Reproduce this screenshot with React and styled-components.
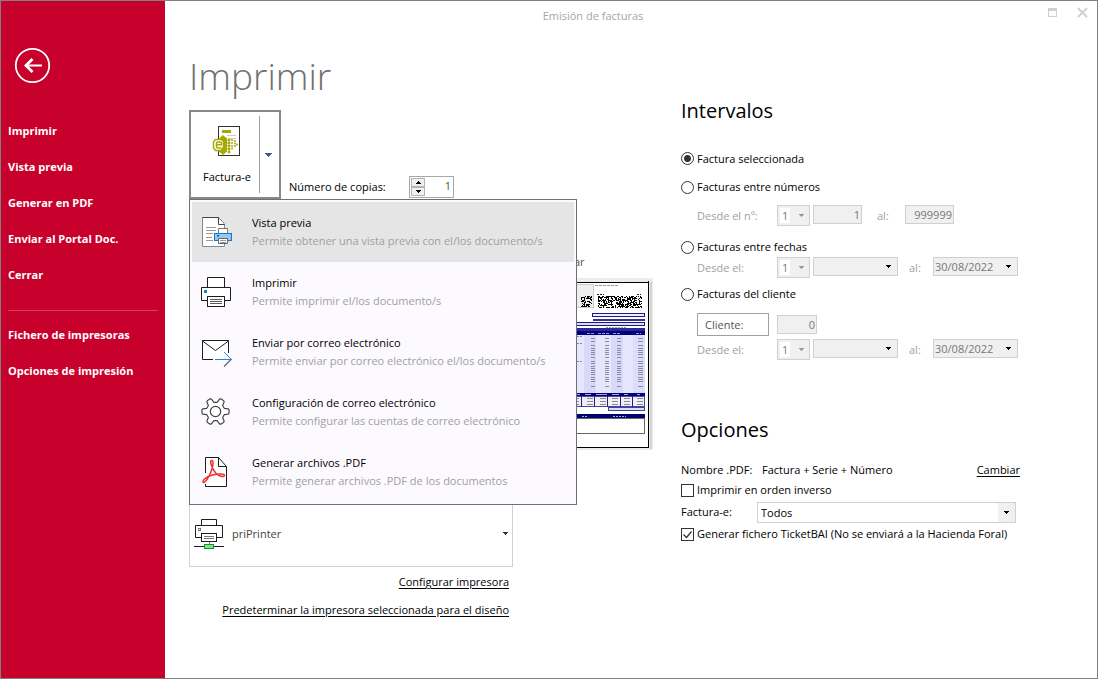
import React from "react";
import styled, { createGlobalStyle, css } from "styled-components";

const Global = createGlobalStyle`
  *, *::before, *::after { box-sizing: border-box; }
  body { margin: 0; background: #fff; color: #000; }
  body, button, input, select { font-family: "Open Sans", "Noto Sans", sans-serif; font-size: 11px; line-height: 16px; }
  button, input, select { color: inherit; border-radius: 0; margin: 0; }
  svg { display: block; flex: none; overflow: visible; }
`;

/* ---------- window frame ---------- */

const Window = styled.div`
  display: grid;
  grid-template-columns: 164px minmax(0, 1fr);
  min-height: 100vh;
  border: 1px solid #808080;
`;

const Sidebar = styled.nav`
  display: flex;
  flex-direction: column;
  background: #c8002c;
  color: #fff;
  padding: 46px 7px 0;
`;

const BackButton = styled.button`
  align-self: flex-start;
  margin: 0 0 29px 6px;
  padding: 0;
  border: 0;
  background: none;
`;

const SideLink = styled.a`
  display: block;
  line-height: 36px;
  font-size: 11px;
  font-weight: 700;
  color: inherit;
  text-decoration: none;
  white-space: nowrap;
`;

const SideRule = styled.hr`
  width: 100%;
  height: 1px;
  margin: 17px 0 6px;
  border: 0;
  background: #d64060;
`;

const Main = styled.main`
  min-width: 0;
`;

const TitleBar = styled.header`
  display: flex;
  align-items: flex-start;
  height: 30px;
  padding-right: 9px;
`;

const WindowTitle = styled.div`
  flex: 1;
  padding: 7px 0 0;
  font-size: 11px;
  color: #a6a6a6;
  text-align: center;
`;

const WindowControls = styled.div`
  display: flex;
  gap: 18px;
  width: 67px;
  padding: 5px 0 0 25px;
`;

const WindowButton = styled.button`
  padding: 0;
  border: 0;
  background: none;
`;

const Columns = styled.div`
  display: grid;
  grid-template-columns: minmax(0, 492px) minmax(0, 1fr);
  padding: 0 24px;
`;

/* ---------- left column ---------- */

const Title = styled.h1`
  margin: 20px 0 9px;
  font-size: 37px;
  line-height: 50px;
  font-weight: 300;
  color: #707070;
`;

const PrintRow = styled.div`
  display: flex;
  align-items: flex-end;
`;

const SplitWrap = styled.div`
  position: relative;
  margin-right: 8px;
`;

const SplitButton = styled.div`
  display: flex;
  align-items: center;
  width: 92px;
  height: 89px;
  border: 2px solid #888;
`;

const SplitMain = styled.button`
  display: flex;
  flex-direction: column;
  align-items: center;
  gap: 12px;
  width: 68px;
  padding: 1px 0 0 4px;
  border: 0;
  background: none;
`;

const SplitArrow = styled.button`
  display: grid;
  place-items: center;
  width: 18px;
  height: 77px;
  padding: 0;
  border: 0;
  border-left: 1px solid #a0a0a0;
  background: none;
`;

const Menu = styled.div`
  position: absolute;
  z-index: 2;
  top: 100%;
  left: 0;
  width: 388px;
  padding: 2px;
  border: 1px solid #6e6e76;
  background: #fcfaff;
`;

const MenuItem = styled.button`
  display: flex;
  gap: 18px;
  width: 100%;
  height: 60px;
  padding: 13px 10px 11px;
  border: 0;
  text-align: left;
  background: ${(p) => (p.$active ? "#e5e5e5" : "transparent")};
`;

const MenuText = styled.span`
  display: grid;
  align-content: start;
  row-gap: 2px;
  white-space: nowrap;
`;

const MenuHint = styled.span`
  color: #a0a0a0;
`;

const CopiesLabel = styled.label`
  width: 120px;
  padding-bottom: 4px;
`;

const Spinner = styled.div`
  display: flex;
  width: 45px;
  height: 22px;
  margin-bottom: 1px;
  padding: 1px;
  border: 1px solid #a8a8a8;
`;

const SpinButtons = styled.div`
  display: grid;
  grid-template-rows: 1fr 1fr;
  width: 14px;
`;

const SpinButton = styled.button`
  display: grid;
  place-items: center;
  min-height: 0;
  padding: 0;
  border: 1px solid #b4b4b4;
  background: #f0f0f0;
`;

const SpinInput = styled.input`
  flex: 1;
  min-width: 0;
  padding: 0 1px 2px 0;
  border: 0;
  text-align: right;
  color: #4c5a3c;
`;

const Preview = styled.figure`
  display: flex;
  flex-direction: column;
  align-items: flex-end;
  gap: 8px;
  max-width: 464px;
  margin: 55px 0 51px;
`;

const Caption = styled.figcaption`
  width: 79px;
  color: #555;
`;

const PrinterBox = styled.div`
  display: flex;
  align-items: center;
  gap: 7px;
  width: 324px;
  height: 66px;
  padding: 0 4px 1px 3px;
  border: 1px solid #d0d0d0;
`;

const Links = styled.div`
  display: flex;
  flex-direction: column;
  align-items: flex-end;
  gap: 12px;
  width: 320px;
  padding: 7px 0 16px;
`;

const Link = styled.a`
  color: inherit;
  white-space: nowrap;
  text-decoration: underline;
  text-underline-offset: 2px;
`;

/* ---------- right column ---------- */

const Section = styled.section`
  padding-top: ${(p) => (p.$first ? 65 : 55)}px;
`;

const SectionTitle = styled.h2`
  margin: 0 0 ${(p) => p.$space}px;
  font-size: 20px;
  line-height: 30px;
  font-weight: 400;
`;

const Choice = styled.label`
  display: flex;
  align-items: center;
  gap: 3px;
  height: ${(p) => p.$height || 20}px;
  white-space: nowrap;
`;

const Radio = styled.input.attrs({ type: "radio" })`
  appearance: none;
  width: 13px;
  height: 13px;
  margin: 0;
  border: 1px solid #333;
  border-radius: 50%;
  &:checked {
    background: radial-gradient(circle, #333 3px, #fff 4px);
  }
`;

const CheckWrap = styled.span`
  display: grid;
  > * { grid-area: 1 / 1; }
`;

const Check = styled.input.attrs({ type: "checkbox" })`
  appearance: none;
  width: 13px;
  height: 13px;
  margin: 0;
  border: 1px solid #333;
  &:not(:checked) + svg { display: none; }
`;

const FieldRow = styled.div`
  display: flex;
  align-items: flex-start;
  gap: 3px;
  height: ${(p) => p.$height}px;
  padding-left: 16px;
`;

const FieldLabel = styled.label`
  width: ${(p) => p.$width}px;
  padding: 3px 0 0 ${(p) => p.$inset || 0}px;
  color: #a0a0a0;
  white-space: nowrap;
`;

const fieldLook = css`
  border: 1px solid #d0d0d0;
  background: #f0f0f0;
  color: #777;
`;

const NumberInput = styled.input`
  ${fieldLook}
  width: ${(p) => p.$width}px;
  height: 19px;
  padding: 0 1px;
  text-align: right;
`;

const Combo = styled.div`
  ${fieldLook}
  display: flex;
  align-items: center;
  justify-content: space-between;
  width: ${(p) => p.$width}px;
  height: ${(p) => (p.$serie ? 21 : 19)}px;
  padding: 0 ${(p) => (p.$serie ? 5 : 6)}px 0 ${(p) => (p.$serie ? 2 : 1)}px;
`;

const BareSelect = styled.select`
  appearance: none;
  flex: ${(p) => (p.$serie ? "0 0 10px" : "1")};
  min-width: 0;
  height: ${(p) => (p.$serie ? 15 : 16)}px;
  padding: 0 0 0 ${(p) => (p.$serie ? 2 : 0)}px;
  border: 0;
  background: ${(p) => (p.$serie ? "#fff" : "transparent")};
  color: ${(p) => p.$color || "#777"};
  opacity: 1;
  line-height: 15px;
`;

const ClientRow = styled.div`
  display: flex;
  align-items: center;
  gap: 8px;
  height: 23px;
  margin: 9px 0 3px;
  padding-left: 16px;
`;

const ClientButton = styled.button`
  width: 72px;
  height: 23px;
  padding: 0 7px;
  border: 1px solid #a0a0a0;
  background: #fff;
  color: #555;
  text-align: left;
`;

const OptionRow = styled.div`
  display: flex;
  align-items: center;
  width: 339px;
  height: ${(p) => p.$height}px;
`;

const OptionName = styled.label`
  width: ${(p) => p.$width}px;
`;

const NameValue = styled.span`
  flex: 1;
`;

const FormatCombo = styled.div`
  display: flex;
  width: 259px;
  height: 21px;
  padding-left: 3px;
  border: 1px solid #d0d0d0;
  align-items: center;
`;

const ComboEnd = styled.span`
  display: grid;
  place-items: center;
  width: 17px;
  height: 19px;
  background: #f0f0f0;
`;

/* ---------- drawings ---------- */

const Triangle = ({ color = "#000", up, wide }) => (
  <svg width={wide ? 7 : 5} height={wide ? 4 : 3} viewBox={wide ? "0 0 7 4" : "0 0 5 3"} shapeRendering="crispEdges">
    {wide ? <path d="M0 0h7L3.5 4z" fill={color} /> : <path d={up ? "M0 3h5L2.5 0z" : "M0 0h5L2.5 3z"} fill={color} />}
  </svg>
);

const BackIcon = () => (
  <svg width="37" height="37" viewBox="0 0 37 37" fill="none" stroke="#fff">
    <circle cx="18.5" cy="18.5" r="16.7" strokeWidth="1.8" />
    <path d="M11 18.5h17" strokeWidth="2" />
    <path d="M18.5 12l-6.5 6.5 6.5 6.5" strokeWidth="2.8" />
  </svg>
);

const MaximizeIcon = () => (
  <svg width="12" height="14" viewBox="0 0 12 14" shapeRendering="crispEdges">
    <rect x="2.5" y="2.5" width="8" height="8" fill="none" stroke="#d0d0d0" />
    <rect x="2" y="2" width="9" height="3" fill="#d0d0d0" />
  </svg>
);

const CloseIcon = () => (
  <svg width="12" height="14" viewBox="0 0 12 14">
    <path d="M2 2l9 9M11 2l-9 9" stroke="#d0d0d0" strokeWidth="2" />
  </svg>
);

const FacturaIcon = () => {
  const dots = [
    [14, 14], [17, 14], [20, 14], [23, 15],
    [14, 17], [17, 17], [20, 17], [23, 17.5],
    [14, 20], [17, 20], [20, 20], [25, 18.5],
    [14, 23], [17, 23], [20, 22.5], [23, 20],
    [17, 26],
  ];
  return (
    <svg width="32" height="32" viewBox="0 0 32 32">
      <rect x="7.5" y="1.5" width="21" height="29" fill="#fff" stroke="#333" />
      <rect x="11" y="5" width="9" height="3" fill="#a6aa00" />
      <path d="M16 10.5h9M18 13.5h7" stroke="#ccc" />
      <path d="M12 10l4 3.5v13l-4 3.500-4-3.500v-13z" fill="#a6aa00" />
      {dots.map(([x, y], i) => (
        <circle key={i} cx={x + 1} cy={y + 1} r={x > 19 ? 1 : 1.4} fill="#a6aa00" />
      ))}
      <path d="M4.5 14.5h6l2 2v6l-2.500 3h-5.500l-2-2.500v-6z" fill="#fff" stroke="#a6aa00" strokeWidth="1.5" />
      <path d="M5.5 19.8h5v-1.300q0-1.500-1.500-1.500h-2q-1.500 0-1.500 1.500v3q0 1.500 1.500 1.500h3.500" fill="none" stroke="#a6aa00" strokeWidth="1.6" />
    </svg>
  );
};

const PreviewIcon = () => (
  <svg width="32" height="32" viewBox="0 0 32 32">
    <path d="M.5 2.500h16l6 7v22h-22z" fill="#fff" stroke="#888" />
    <path d="M.5 2.500h16l6 7" fill="none" stroke="#444" />
    <path d="M16.5 2.500v7h6" fill="#fff" stroke="#444" />
    <path d="M4 12.500h10M4 15.500h10M4 18.500h7M4 22.500h6M4 25.500h7" stroke="#999" />
    <path d="M16.5 18v-4.500h9V18" fill="#fff" stroke="#777" />
    <rect x="12.5" y="18.5" width="17" height="7" fill="#94c8f4" stroke="#1c76c6" />
    <rect x="15" y="20" width="2" height="1.5" fill="#0b4f9c" />
    <path d="M16.5 23.500h9v5h-9z" fill="#fff" stroke="#666" />
    <path d="M18 25.500h6M18 27.500h6" stroke="#999" />
  </svg>
);

const PrinterIcon = () => (
  <svg width="32" height="32" viewBox="0 0 32 32" fill="#fff" stroke="#1c1c1c">
    <path d="M5.5 12V2.5h17V12" />
    <path d="M5.5 25.5h-6v-13h29v13h-6z" />
    <rect x="5.5" y="21.5" width="17" height="10" />
    <path d="M8 24.5h12M8 26.5h12M8 28.5h12" stroke="#555" />
    <rect x="2" y="15" width="3" height="3" fill="#0a84d0" stroke="none" />
  </svg>
);

const MailIcon = () => (
  <svg width="32" height="32" viewBox="0 0 32 32" fill="none" stroke="#1c1c1c">
    <path d="M11 24.500H.5v-19h26V18" fill="#fff" />
    <path d="M.5 6L13.5 15.500 26.500 6" />
    <path d="M13 24.500h15M22 17l7.500 7.500" stroke="#1a8ad4" />
    <path d="M22 31.500l7.500-7.500" stroke="#666" strokeWidth="1.3" />
  </svg>
);

const GearIcon = () => {
  const cx = 13.5;
  const cy = 16.5;
  const pt = (r, deg) => {
    const a = (deg * Math.PI) / 180;
    return `${(cx + r * Math.cos(a)).toFixed(2)} ${(cy + r * Math.sin(a)).toFixed(2)}`;
  };
  const teeth = [0, 60, 120, 180, 240, 300]
    .map((a) => `${pt(9.3, a - 20)} L${pt(13, a - 12)} Q${pt(14, a - 7)} ${pt(13.6, a)} Q${pt(14, a + 7)} ${pt(13, a + 12)} L${pt(9.3, a + 20)}`)
    .join(" L");
  return (
    <svg width="32" height="32" viewBox="0 0 32 32" fill="#fff" stroke="#444" strokeWidth="1.2" strokeLinejoin="round">
      <path d={`M${teeth} Z`} />
      <circle cx={cx} cy={cy} r="5.2" />
    </svg>
  );
};

const PdfIcon = () => (
  <svg width="32" height="32" viewBox="0 0 32 32" fill="none">
    <path d="M3.5 2.500h13l8 9v20h-21z" fill="#fff" />
    <path d="M3.5 18V2.500h13l8 9v20h-21V29M16.500 2.500v9h8" stroke="#1c1c1c" />
    <path
      d="M9.5 5.500c2.500 0 1.500 5 .3 9C8 20.500 3.500 28 1.500 27.500c-2-.8 2-6 9-7.500 6-1.400 12-1.500 12 .3 0 2.500-6 1-9-2.500C10.500 14 7 5.500 9.500 5.500z"
      stroke="#ee3030"
      strokeWidth="1.5"
    />
  </svg>
);

const NetPrinterIcon = () => (
  <svg width="32" height="32" viewBox="0 0 32 32" fill="#fff" stroke="#1c1c1c">
    <path d="M8.5 8V1.500h15V8" />
    <path d="M8.5 19.500h-6v-12h27v12h-6z" />
    <rect x="8.5" y="15.5" width="15" height="8" />
    <path d="M11 18.500h10M11 20.500h10" stroke="#777" />
    <rect x="5.5" y="10.5" width="2" height="2" stroke="#777" />
    <path d="M1 28.500h30" />
    <path d="M16.5 24v2" stroke="#777" />
    <rect x="11.5" y="26.5" width="9" height="4" fill="#8fdc98" stroke="#0a9a2c" />
  </svg>
);

const CheckMark = () => (
  <svg width="13" height="13" viewBox="0 0 13 13" fill="none" stroke="#333" strokeWidth="1.3" pointerEvents="none">
    <path d="M2.5 6.500l3 3 5-6" />
  </svg>
);

/* cells of a pseudo-random bar pattern, the same on every render */
const speckle = (cols, rows, seed) => {
  const cells = [];
  let s = seed;
  for (let y = 0; y < rows; y++) {
    for (let x = 0; x < cols; x++) {
      s = (s * 16807) % 2147483647;
      if (s / 2147483647 > 0.42) cells.push(`M${x} ${y}h1v1h-1z`);
    }
  }
  return cells.join("");
};

const InvoiceDrawing = () => {
  const lineRows = [60, 63, 67, 70, 72, 74, 76, 79, 83, 85, 88, 90, 92, 94, 96, 99, 101, 103, 108];
  return (
    <svg width="133" height="172" viewBox="0 0 133 172" shapeRendering="crispEdges">
      <rect width="133" height="172" fill="#ececec" />
      <rect x="130" y="4" width="2" height="167" fill="#d4d4d4" />
      <rect x="1" y="4" width="127" height="165" fill="#fff" stroke="#000" />
      <rect x="128" y="3" width="1" height="167" fill="#000" />
      <rect x="10.5" y="6.5" width="63" height="23" fill="#eee" stroke="#ccc" />
      <path d="M75 7.5h24" stroke="#999" strokeDasharray="3 1" />
      <path d="M77 16.5h7M117 16.5h4" stroke="#222" strokeDasharray="2 1" />
      <path d={speckle(11, 11, 7331)} transform="translate(61 18)" />
      <path d={speckle(44, 12, 98213)} transform="translate(78 18)" />
      <rect x="72.5" y="35.5" width="52" height="3" fill="#eef" stroke="#1a1a8c" />
      <rect x="73" y="41" width="52" height="2" fill="#34349a" />
      <rect x="10.5" y="44.5" width="114" height="3" fill="#dde" stroke="#1a1a8c" />
      <path d="M86 49.5h20" stroke="#999" strokeDasharray="2 1" />
      <rect x="10" y="50" width="115" height="3" fill="#2a2a92" />
      <rect x="10" y="53" width="115" height="4" fill="#000080" />
      <path d="M67 55.5h8M78 55.5h12M93 55.5h8M116 55.5h5" stroke="#99c" strokeDasharray="3 1" />
      <rect x="10" y="57" width="115" height="58" fill="#e6e6fe" />
      <path d="M70 57v58M97 57v58" stroke="#d8d8fa" strokeWidth="12" />
      <path d="M119 57v58" stroke="#dcdcfc" strokeWidth="12" />
      {lineRows.map((y) => (
        <path key={y} d={`M71 ${y + 0.5}h4M85 ${y + 0.5}h4M97 ${y + 0.5}h4M118 ${y + 0.5}h5`} stroke="#8c8c94" />
      ))}
      <path d="M54 58.5h8M54 65.5h8M54 83.5h8" stroke="#889" strokeDasharray="2 1" />
      <rect x="10" y="115" width="115" height="3" fill="#000080" />
      <path d="M55 116.5h5M65 116.5h6M76 116.5h11M92 116.5h7M104 116.5h4M117 116.5h3" stroke="#aac" />
      <rect x="10.5" y="118.5" width="114" height="10" fill="#eeeef4" stroke="#4848a0" />
      <path d="M61.5 118v11M74.5 118v11M87.5 118v11M100.5 118v11M112.5 118v11" stroke="#20208a" />
      {[120, 123, 126].map((y) => (
        <path key={y} d={`M55 ${y + 0.5}h4M67 ${y + 0.5}h6M80 ${y + 0.5}h6M92 ${y + 0.5}h6M104 ${y + 0.5}h6M117 ${y + 0.5}h6`} stroke="#8a8a90" />
      ))}
      <rect x="88.5" y="129.5" width="36" height="3" fill="#dde" stroke="#4040a8" />
      <rect x="10" y="136" width="115" height="4" fill="#000070" />
      <path d="M62 138.5h5M93 138.5h13" stroke="#aac" strokeDasharray="2 1" />
      <rect x="10.5" y="140.5" width="114" height="15" fill="#fff" stroke="#666" />
    </svg>
  );
};

/* ---------- page ---------- */

const menuItems = [
  { title: "Vista previa", hint: "Permite obtener una vista previa con el/los documento/s", Icon: PreviewIcon },
  { title: "Imprimir", hint: "Permite imprimir el/los documento/s", Icon: PrinterIcon },
  { title: "Enviar por correo electrónico", hint: "Permite enviar por correo electrónico el/los documento/s", Icon: MailIcon },
  { title: "Configuración de correo electrónico", hint: "Permite configurar las cuentas de correo electrónico", Icon: GearIcon },
  { title: "Generar archivos .PDF", hint: "Permite generar archivos .PDF de los documentos", Icon: PdfIcon },
];

const SerieSelect = ({ id }) => (
  <Combo $width={33} $serie>
    <BareSelect id={id} $serie disabled defaultValue="1">
      <option>1</option>
    </BareSelect>
    <Triangle color="#999" />
  </Combo>
);

const DateSelect = ({ value, ...rest }) => (
  <Combo $width={85}>
    <BareSelect disabled defaultValue={value} {...rest}>
      <option>{value}</option>
    </BareSelect>
    <Triangle />
  </Combo>
);

const DateRange = ({ id, height }) => (
  <FieldRow $height={height}>
    <FieldLabel htmlFor={`${id}-serie`} $width={77}>Desde el:</FieldLabel>
    <SerieSelect id={`${id}-serie`} />
    <DateSelect value="" aria-label="Fecha inicial" />
    <FieldLabel htmlFor={`${id}-fin`} $width={29} $inset={8}>al:</FieldLabel>
    <DateSelect id={`${id}-fin`} value="30/08/2022" />
  </FieldRow>
);

export default function App() {
  return (
    <>
      <Global />
      <Window>
        <Sidebar>
          <BackButton aria-label="Volver"><BackIcon /></BackButton>
          <SideLink href="#imprimir">Imprimir</SideLink>
          <SideLink href="#vista">Vista previa</SideLink>
          <SideLink href="#pdf">Generar en PDF</SideLink>
          <SideLink href="#portal">Enviar al Portal Doc.</SideLink>
          <SideLink href="#cerrar">Cerrar</SideLink>
          <SideRule />
          <SideLink href="#fichero">Fichero de impresoras</SideLink>
          <SideLink href="#opciones">Opciones de impresión</SideLink>
        </Sidebar>

        <Main>
          <TitleBar>
            <WindowTitle>Emisión de facturas</WindowTitle>
            <WindowControls>
              <WindowButton aria-label="Maximizar"><MaximizeIcon /></WindowButton>
              <WindowButton aria-label="Cerrar ventana"><CloseIcon /></WindowButton>
            </WindowControls>
          </TitleBar>

          <Columns>
            <div>
              <Title>Imprimir</Title>
              <PrintRow>
                <SplitWrap>
                  <SplitButton>
                    <SplitMain><FacturaIcon />Factura-e</SplitMain>
                    <SplitArrow aria-label="Más opciones"><Triangle wide color="#44598c" /></SplitArrow>
                  </SplitButton>
                  <Menu role="menu">
                    {menuItems.map(({ title, hint, Icon }, i) => (
                      <MenuItem key={title} role="menuitem" $active={i === 0}>
                        <Icon />
                        <MenuText>
                          <span>{title}</span>
                          <MenuHint>{hint}</MenuHint>
                        </MenuText>
                      </MenuItem>
                    ))}
                  </Menu>
                </SplitWrap>
                <CopiesLabel htmlFor="copias">Número de copias:</CopiesLabel>
                <Spinner>
                  <SpinButtons>
                    <SpinButton aria-label="Más"><Triangle up /></SpinButton>
                    <SpinButton aria-label="Menos"><Triangle /></SpinButton>
                  </SpinButtons>
                  <SpinInput id="copias" defaultValue="1" />
                </Spinner>
              </PrintRow>

              <Preview>
                <Caption>ar</Caption>
                <InvoiceDrawing />
              </Preview>

              <PrinterBox>
                <NetPrinterIcon />
                <BareSelect aria-label="Impresora" $color="#444" defaultValue="priPrinter">
                  <option>priPrinter</option>
                </BareSelect>
                <Triangle color="#333" />
              </PrinterBox>
              <Links>
                <Link href="#configurar">Configurar impresora</Link>
                <Link href="#predeterminar">Predeterminar la impresora seleccionada para el diseño</Link>
              </Links>
            </div>

            <div>
              <Section $first>
                <SectionTitle $space={22}>Intervalos</SectionTitle>
                <Choice $height={21}><Radio name="intervalo" defaultChecked />Factura seleccionada</Choice>
                <Choice $height={36}><Radio name="intervalo" />Facturas entre números</Choice>
                <FieldRow $height={32}>
                  <FieldLabel htmlFor="num-serie" $width={77}>Desde el nº:</FieldLabel>
                  <SerieSelect id="num-serie" />
                  <NumberInput aria-label="Número inicial" $width={49} defaultValue="1" disabled />
                  <FieldLabel htmlFor="num-fin" $width={37} $inset={12}>al:</FieldLabel>
                  <NumberInput id="num-fin" $width={49} defaultValue="999999" disabled />
                </FieldRow>
                <Choice $height={20}><Radio name="intervalo" />Facturas entre fechas</Choice>
                <DateRange id="fechas" height={27} />
                <Choice $height={20}><Radio name="intervalo" />Facturas del cliente</Choice>
                <ClientRow>
                  <ClientButton>Cliente:</ClientButton>
                  <NumberInput aria-label="Cliente" $width={40} defaultValue="0" disabled />
                </ClientRow>
                <DateRange id="cliente" height={21} />
              </Section>

              <Section>
                <SectionTitle $space={15}>Opciones</SectionTitle>
                <OptionRow $height={20}>
                  <OptionName as="span" $width={81}>Nombre .PDF:</OptionName>
                  <NameValue>Factura + Serie + Número</NameValue>
                  <Link href="#cambiar">Cambiar</Link>
                </OptionRow>
                <Choice $height={20}><Check />Imprimir en orden inverso</Choice>
                <OptionRow $height={24}>
                  <OptionName htmlFor="formato" $width={76}>Factura-e:</OptionName>
                  <FormatCombo>
                    <BareSelect id="formato" $color="#000" defaultValue="Todos">
                      <option>Todos</option>
                    </BareSelect>
                    <ComboEnd><Triangle /></ComboEnd>
                  </FormatCombo>
                </OptionRow>
                <Choice $height={20}>
                  <CheckWrap><Check defaultChecked /><CheckMark /></CheckWrap>
                  Generar fichero TicketBAI (No se enviará a la Hacienda Foral)
                </Choice>
              </Section>
            </div>
          </Columns>
        </Main>
      </Window>
    </>
  );
}
